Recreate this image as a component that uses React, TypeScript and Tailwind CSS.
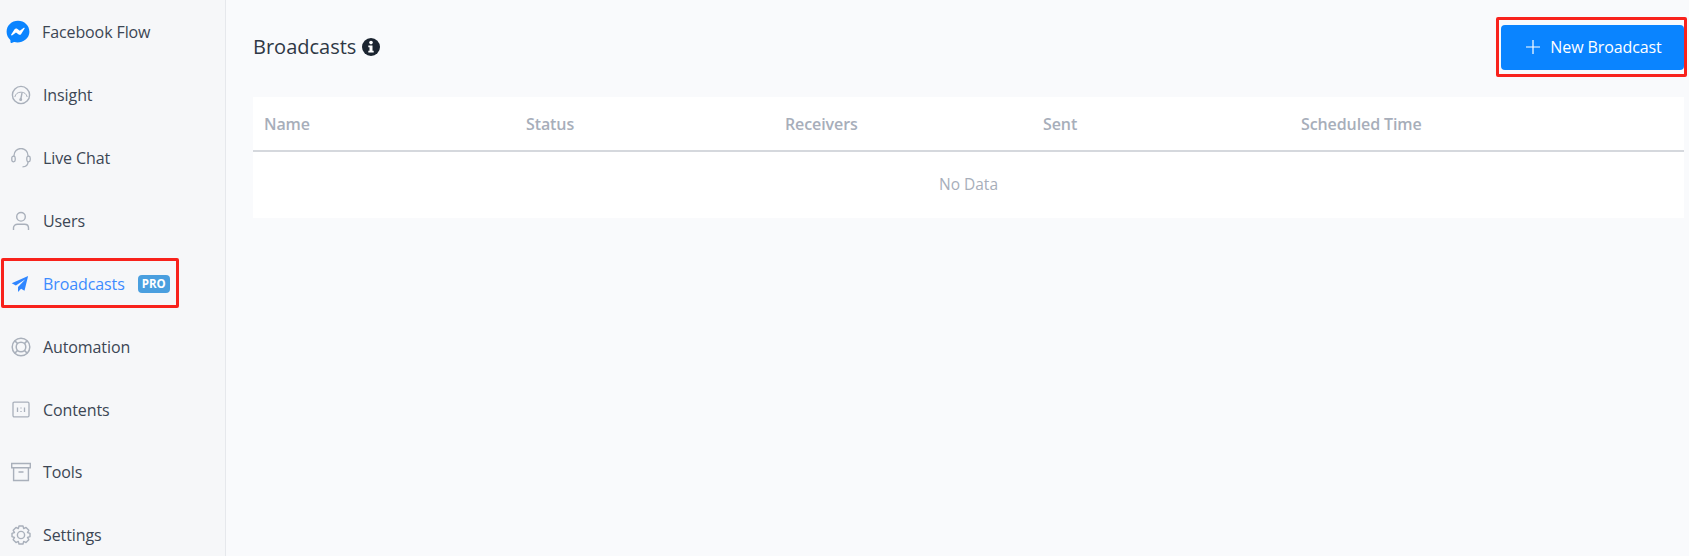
const font = "font-['Open_Sans',sans-serif]"

const InsightIcon = () => (
  <svg viewBox="0 0 20 20" className="w-[20px] h-[20px]" fill="none" stroke="#a9b0bb" strokeWidth="1.4">
    <circle cx="10" cy="10" r="8.6" />
    <path d="M3.8 12a6.4 6.4 0 0 1 12.4 0" strokeWidth="1" />
    <path d="M11 8 9.8 14" />
    <circle cx="9.7" cy="14.6" r="0.8" />
  </svg>
)

const ChatIcon = () => (
  <svg viewBox="0 0 20 20" className="w-[20px] h-[20px]" fill="none" stroke="#a9b0bb" strokeWidth="1.3">
    <path d="M3 8.5V7.5a7 7 0 0 1 14 0v1" />
    <rect x="0.8" y="8.2" width="3.4" height="5.6" rx="1.7" />
    <rect x="15.8" y="8.2" width="3.4" height="5.6" rx="1.7" />
    <path d="M17 14c0 3.2-2.4 4.8-5.5 4.8" />
  </svg>
)

const UserIcon = () => (
  <svg viewBox="0 0 20 20" className="w-[20px] h-[20px]" fill="none" stroke="#a9b0bb" strokeWidth="1.4">
    <circle cx="10" cy="5.8" r="4.3" />
    <path d="M2.5 19v-2.2c0-2.2 1.8-3.6 4-3.6h7c2.2 0 4 1.4 4 3.6V19" />
  </svg>
)

const PlaneIcon = () => (
  <svg viewBox="0 0 20 20" className="w-[18px] h-[18px]" fill="#2f86ff">
    <path d="M19 1 .8 9.2l4.6 2.6L16 4.6 7.8 13.2V19l3.4-3.6 3.8 2.1z" />
  </svg>
)

const LifeIcon = () => (
  <svg viewBox="0 0 20 20" className="w-[20px] h-[20px]" fill="none" stroke="#a9b0bb" strokeWidth="1.5">
    <circle cx="10" cy="10" r="8.8" />
    <circle cx="10" cy="10" r="4.8" />
    <path d="m3.8 3.8 2.8 2.8M16.2 3.8l-2.8 2.8M3.8 16.2l2.8-2.8M16.2 16.2l-2.8-2.8" />
  </svg>
)

const ContentsIcon = () => (
  <svg viewBox="0 0 20 20" className="w-[20px] h-[20px]" fill="none" stroke="#a9b0bb" strokeWidth="1.3">
    <rect x="2" y="2.2" width="16" height="14.6" rx="1.2" />
    <path d="M6.5 7.5v4.5M10 7.5v1M10 11v1M13.5 7.5v4.5" />
  </svg>
)

const ToolsIcon = () => (
  <svg viewBox="0 0 20 20" className="w-[20px] h-[20px]" fill="none" stroke="#a9b0bb" strokeWidth="1.4">
    <path d="M.7 1.5h18.6v4.2H.7zM2.6 5.7v12.8h14.8V5.7M7.5 10h5" />
  </svg>
)

const GearIcon = () => (
  <svg viewBox="0 0 20 20" className="w-[20px] h-[20px]" fill="none" stroke="#a9b0bb" strokeWidth="1.4" strokeLinejoin="round">
    <path d="M8 1h4l.7 2.6 2.3-1.2 2.8 2.9-1.3 2.2 2.5.8v3.4l-2.5.8 1.3 2.2-2.8 2.9-2.3-1.2L12 19H8l-.7-2.6L5 17.6l-2.8-2.9 1.3-2.2-2.5-.8V8.3l2.5-.8-1.3-2.2L5 2.4l2.3 1.2z" />
    <circle cx="10" cy="10" r="3.6" />
  </svg>
)

const items = [
  { label: "Insight", icon: <InsightIcon /> },
  { label: "Live Chat", icon: <ChatIcon /> },
  { label: "Users", icon: <UserIcon /> },
  { label: "Broadcasts", icon: <PlaneIcon />, active: true },
  { label: "Automation", icon: <LifeIcon /> },
  { label: "Contents", icon: <ContentsIcon /> },
  { label: "Tools", icon: <ToolsIcon /> },
  { label: "Settings", icon: <GearIcon /> },
]

const columns = ["Name", "Status", "Receivers", "Sent", "Scheduled Time"]

export default function App() {
  return (
    <div className={`${font} flex h-[556px] w-[1689px] overflow-hidden bg-[#f9fafc]`}>
      <aside className="w-[226px] shrink-0 bg-[#f6f7f9] border-r border-[#e6e8ec] pt-[18px]">
        <div className="flex items-center h-[28px] pl-[6px] text-[16px] tracking-[-0.1px] text-[#3c4654]">
          <svg viewBox="0 0 24 24" className="w-[24px] h-[24px] mr-[12px]">
            <path
              fill="#0a84ff"
              d="M12 .8C5.6.8.6 5.5.6 11.7c0 3.2 1.3 6 3.5 8 .4.3.3.5.4 2.5 0 .6.6 1 1.2.8 2.2-1 2.3-1.1 2.7-1 6.5 1.8 15-2.5 15-10.3C23.4 5.5 18.4.8 12 .8z"
            />
            <path fill="#fff" d="m5.2 14.6 3.4-5.3c.5-.9 1.7-1.1 2.5-.5l2.7 2 4-3c.5-.4 1.2.2.8.8l-3.4 5.3c-.5.9-1.7 1.1-2.5.5l-2.7-2-4 3c-.5.4-1.2-.2-.8-.8z" />
          </svg>
          Facebook Flow
        </div>
        <nav className="mt-[18px] flex flex-col">
          {items.map((item) => (
            <div
              key={item.label}
              className={`relative flex items-center h-[62.85px] pl-[11px] text-[16px] tracking-[-0.1px] ${item.active ? "text-[#3d8bff]" : "text-[#3c4654]"}`}
            >
              <span className="w-[32px] shrink-0">{item.icon}</span>
              {item.label}
              {item.active && (
                <>
                  <span className="ml-[13px] rounded-[4px] bg-[#4a9fdf] px-[4px] text-[11.5px] leading-[18px] tracking-normal font-bold text-white">
                    PRO
                  </span>
                  <span className="absolute left-[1px] top-[5px] w-[178px] h-[50px] rounded-[2px] border-[3px] border-[#f8221c]" />
                </>
              )}
            </div>
          ))}
        </nav>
      </aside>

      <main className="flex-1 min-w-0 pl-[27px] pr-[5px]">
        <div className="relative flex items-center justify-between h-[97px]">
          <h1 className="flex items-center gap-[6px] -mt-[3px] text-[20px] font-normal text-[#2f3845]">
            Broadcasts
            <svg viewBox="0 0 18 18" className="w-[18px] h-[18px]">
              <circle cx="9" cy="9" r="9" fill="#1b2430" />
              <circle cx="9" cy="4.6" r="1.8" fill="#fff" />
              <path fill="#fff" d="M6.3 7.4h4.2v5.4h1.2v1.8H6.3v-1.8h1.2V9.2H6.3z" />
            </svg>
          </h1>
          <button className="-mt-[3px] flex items-center justify-center w-[183px] h-[45px] pl-[3px] rounded-[4px] bg-[#0a84ff] text-[16px] tracking-[-0.1px] text-white">
            <svg viewBox="0 0 14 14" className="w-[14px] h-[14px] mr-[10px]" stroke="#fff" strokeWidth="1.2">
              <path d="M7 0v14M0 7h14" />
            </svg>
            New Broadcast
          </button>
          <span className="absolute right-[-3px] top-[17px] w-[191px] h-[60px] rounded-[2px] border-[3px] border-[#f8221c]" />
        </div>

        <div className="bg-white">
          <div className="grid grid-cols-[262px_259px_258px_258px_1fr] h-[55px] items-center border-b-2 border-[#d5d8dd] pl-[11px] text-[16px] tracking-[-0.1px] font-semibold text-[#a7aeba]">
            {columns.map((col) => (
              <div key={col}>{col}</div>
            ))}
          </div>
          <div className="flex items-center justify-center h-[66px] text-[15.5px] text-[#a7aeba]">No Data</div>
        </div>
      </main>
    </div>
  )
}
